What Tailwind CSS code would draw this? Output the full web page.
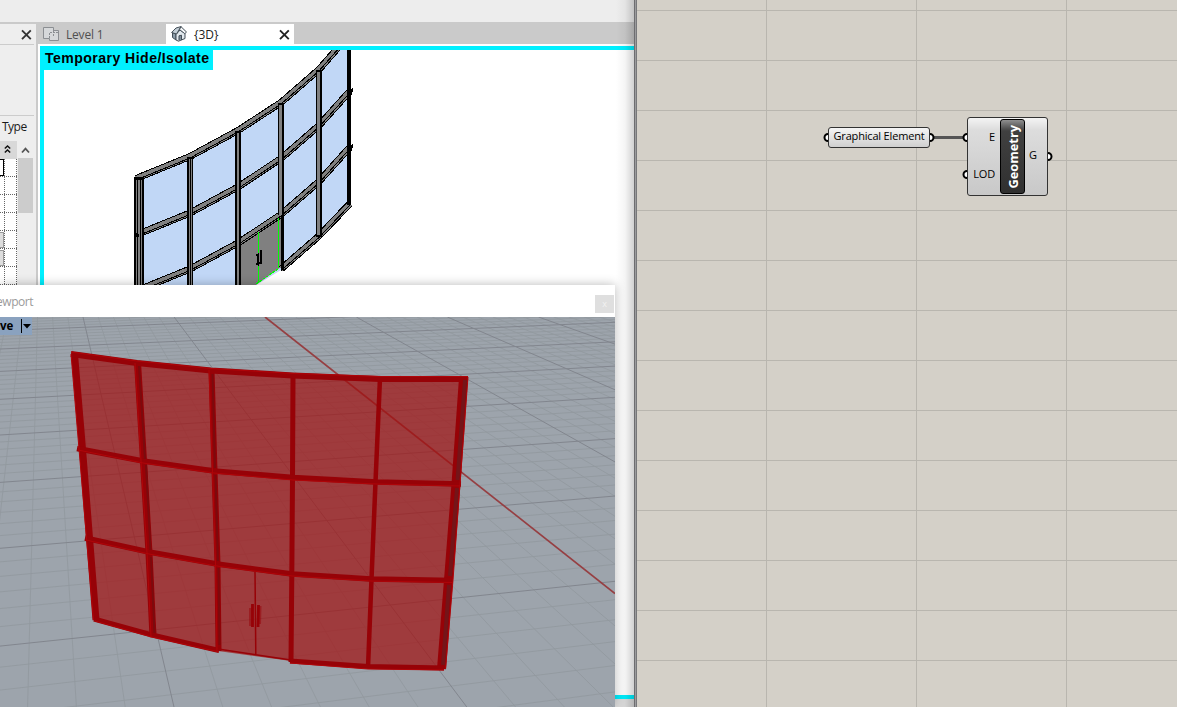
<!DOCTYPE html>
<html lang="en">
<head>
<meta charset="utf-8">
<title>Curtain wall geometry</title>
<script src="https://cdn.jsdelivr.net/npm/@tailwindcss/browser@4"></script>
</head>
<body class="flex w-[1177px] h-[707px] overflow-hidden bg-[#d4d0c8] font-['Open_Sans','Noto_Sans',sans-serif] text-[12px] text-[#1a1a1a]">

<!-- Modelling application -->
<main class="relative flex flex-col w-[634px] h-[707px] shrink-0 overflow-hidden bg-[#ededed]">
  <div class="h-[22px] shrink-0 bg-[#ededed]"></div>
  <div class="flex h-[685px] shrink-0 bg-[#cacaca] pt-[2px]">
    <!-- Properties -->
    <aside class="w-[36px] h-full shrink-0 bg-[#eeeeee] flex flex-col">
      <div class="h-[21px] w-[34px] border-b border-[#cccccc] flex items-center justify-end pr-[2px] shrink-0">
        <svg class="size-[11px]" viewBox="0 0 11 11"><path d="M1 1.400 9.800 10.200M9.800 1.400 1 10.200" stroke="#333" stroke-width="1.900"/></svg>
      </div>
      <div class="h-[71px] w-[34px] border-b border-[#cccccc] shrink-0"></div>
      <div class="h-[25px] shrink-0 pl-[2px] pt-[2px] leading-[18px] text-[12px] tracking-[-0.5px]">Type</div>
      <div class="flex shrink-0">
        <div class="w-[17px] shrink-0">
          <svg class="block" width="17" height="150" viewBox="0 0 17 150" shape-rendering="crispEdges">
            <path fill="#d8d8d8" d="M0 0h17v18H0z"/><path fill="#fff" d="M0 18h17v132H0z"/>
            <g shape-rendering="auto" fill="none" stroke="#111" stroke-width="1.5"><path d="m4.800 7.500 2.700-2.500 2.700 2.500M4.800 11.500l2.700-2.500 2.700 2.500"/></g>
            <g stroke="#666" stroke-dasharray="1 1"><path d="M4.500 18v132M16.500 18v132M0 35.500h17M0 53.500h17M0 71.500h17M0 89.500h17M0 107.500h17M0 125.500h17M0 143.500h17"/></g>
            <path d="M-1 18.500h4.500v16H-1z" fill="#fff" stroke="#000"/>
            <path d="M-1 91.500h4.500v15H-1zM-1 109.500h4.500v15H-1z" fill="#ddd" stroke="#999"/>
          </svg>
        </div>
        <div class="w-[17px] pl-px shrink-0">
          <svg class="block" width="15" height="17"><path d="m4 11.500 3.500-3.800 3.500 3.800" fill="none" stroke="#555" stroke-width="1.800"/></svg>
          <div class="h-[55px] w-[15px] bg-[#cccccc]"></div>
        </div>
      </div>
    </aside>
    <!-- Document view -->
    <section class="flex flex-col grow pl-[2px]">
      <div class="flex h-[20px] shrink-0">
        <div class="flex items-center w-[128px] text-[#505050] pl-[5px]">
          <svg class="shrink-0" width="16" height="16" viewBox="0 0 16 16" fill="#d6d8da" stroke="#8b8e92"><path d="M.5 1.500h10v3h5v10h-9v-2h-6z"/><path d="M6.500 12V6.500M10.500 4v2M10.500 8v2M7 6.500h8" stroke-dasharray="2 1" fill="none"/></svg>
          <span class="pl-[7px] pt-px text-[12px] tracking-[-0.2px]">Level 1</span>
        </div>
        <div class="flex items-center w-[128px] bg-white text-[#222] pl-[5px]">
          <svg class="shrink-0" width="16" height="16" viewBox="0 0 16 16" stroke="#424d56" stroke-linejoin="round"><path d="M1.500 6.500 5 8v6l-3.500-2.500z" fill="#8d9daa"/><path d="M5 8.500 9 4l5 3.500v5l-6.500 2.700L5 14z" fill="#e1e8ed"/><path d="m.6 6.500 4.400-4.500 5-1.400L5.500 8z" fill="#c3ced6"/><path d="M10 .7 15.500 6l-1.700 1.700L8.500 3.500z" fill="#f7f9fa"/><path d="M8 14.500V9.800l2.500-.6V14" fill="#7d8d99"/></svg>
          <span class="pl-[7px] pt-px text-[12px] grow">{3D}</span>
          <svg class="mr-[4px]" width="11" height="11"><path d="M1 1.400 9.800 10.200M9.800 1.400 1 10.200" stroke="#222" stroke-width="1.900"/></svg>
        </div>
      </div>
      <div class="h-[654px] shrink-0 bg-white pl-[2px] pt-[2px]">
        <div class="relative h-[653px] border-l-4 border-y-4 border-[#00f0ff] bg-white">
          <svg class="absolute left-0 top-0" width="590" height="240" viewBox="44 50 590 240">
            <path fill="#c1d7f6" d="M136 177 190 155 238 129 281 101 319 68 350 34V204L319 236 281 270 258 284 190 324 136 346z"/>
            <path fill="#808080" d="M240 243 281 215V267L256 285H240z"/>
            <g fill="none" stroke="#000" shape-rendering="crispEdges">
              <g stroke-width="7">
                <path d="M136 178.500 190 156.500 238 130.500 281 102.500 319 69.500 350 34"/>
                <path d="M136 235 190 213 238 187 281 158.500 319 125.500 350 91"/>
                <path d="M136 291 190 269 238 243 281 214.500 319 181.500 350 147"/>
                <path d="M281 269 319 236 350 203.500"/>
              </g>
              <g stroke="#808080" stroke-width="5">
                <path d="M136 178.500 190 156.500 238 130.500 281 102.500 319 69.500 350 34"/>
                <path d="M136 235 190 213 238 187 281 158.500 319 125.500 350 91"/>
                <path d="M136 291 190 269 238 243 281 214.500 319 181.500 350 147"/>
                <path d="M281 269 319 236 350 203.500"/>
              </g>
              <g stroke-width="1">
                <path d="M136 180 190 158 238 132 281 104 319 71 350 35.500"/>
                <path d="M136 236.500 190 214.500 238 188.500 281 160 319 127 350 92.500"/>
                <path d="M136 292.500 190 270.500 238 244.500 281 216 319 183 350 148.500"/>
                <path d="M281 270.500 319 237.500 350 205"/>
              </g>
            </g>
            <g shape-rendering="crispEdges">
              <path d="M134 177h10v113h-10zM187 157h6v133h-6zM235 131h6v159h-6zM278 103h6v112h-6zM281 215h3v55h-3zM316 70h6v167h-6zM347 50h4v155h-4z"/>
              <path fill="#808080" d="M136 180h1v110h-1zM138 180h2v110h-2zM141 180h1v110h-1zM189 159h1v131h-1zM191 159h1v131h-1zM237 133h2v157h-2zM279 105h3v110h-3zM317 72h3v163h-3z"/>
              <path d="m347 90 6-2v4l-5 2zM347 146l6-2v4l-5 2zM134 233l5 1v3h-4z"/>
              <path d="M258 232h1v51h-1zM278 218h1v50h-1z" fill="#00ff00"/>
              <path d="m256 284 22-15" stroke="#00ff00" stroke-dasharray="3 1" fill="none"/>
              <path d="M256 254h2v-1h1v13h-1v-1h-2v-2h1v-7h-1zM260 250h2v14h-3v-2h1z"/>
            </g>
          </svg>
          <div class="relative w-[169px] h-[20px] bg-[#00f0ff] pl-px text-[14.100px] leading-[16px] font-bold font-['Liberation_Sans',sans-serif] text-black whitespace-nowrap tracking-[0.440px]">Temporary Hide/Isolate</div>
        </div>
      </div>
      <div class="grow bg-[#dddddd]"></div>
    </section>
  </div>
  <div class="absolute right-0 top-0 w-[18px] h-full bg-gradient-to-r from-black/0 via-black/4 to-black/18"></div>

  <!-- Floating viewport window -->
  <div class="absolute left-0 top-[285px] w-[615px] h-[422px] shadow-[0_0_10px_rgba(0,0,0,0.28)] flex flex-col">
    <div class="h-[32px] shrink-0 bg-white flex items-center justify-between pr-px">
      <span class="-ml-[4px] pt-px text-[12px] tracking-[-0.45px] text-[#9b9b9b]">ewport</span>
      <div class="w-[19px] h-[18px] mt-[5px] bg-[#dfdfdf] text-[#f2f2f2] text-[9px] leading-[17px] text-center">x</div>
    </div>
    <div class="relative h-[390px] bg-[#9da4ac] overflow-hidden">
      <svg class="absolute left-0 top-0" width="615" height="390" viewBox="0 317 615 390">
        <g id="minor" stroke="#92999f" stroke-opacity=".85" fill="none"></g>
        <g id="major" stroke="#82868e" fill="none"></g>
        <path d="M265 317 615 593.500" stroke="#963f42" stroke-width="1.700"/>
        <path fill="#a1100f" fill-opacity=".71" d="M72 353 137 362 211 370 293 375 380 378 467 378 459 484 452 580 444 669 368 667 291 661 218 651 152 636 95 620 83 449z"/>
        <g fill="none" stroke="#970207" stroke-linejoin="round">
          <g stroke-width="6">
            <path stroke-width="7" d="M74.500 354 82.500 449 89.500 538 96 620"/>
            <path stroke-width="7" d="M137.500 362 143.500 461 149 553 153 637"/>
            <path d="M211.500 370 214.500 471 217.500 564 218.500 651"/>
            <path stroke-width="5" d="M293 375 292.500 478 291.800 574 291 662"/>
            <path stroke-width="4.500" d="M380 378 375.500 482 371.500 579 368 668"/>
            <path stroke-width="9" d="M463.500 378 456 484 448.500 580 441.500 669"/>
            <path d="M71 354 137 363 211 370.500 293 375.500 380 379 468 379"/>
            <path stroke-width="5.500" d="M77 448.500 143 461 214 471 293 477.500 376 482 461 484"/>
            <path stroke-width="5.500" d="M85 538 149 552 217 564 292 574 371 579 453 580.500"/>
            <path stroke-width="5" d="M94 619 152 635 219 650.500M290 661 368 666.500 444 668"/>
          </g>
          <g stroke="#7b0b0e" stroke-width="2">
            <path d="M139 366 145 459M146 465 150.500 550M151 557 154.500 633M212.500 374 215 468M215.500 475 218 561M218.500 568 219.500 645"/>
            <path stroke="#741519" stroke-width="4" d="M465 380 457.500 480M457 488 450 576M449 585 443 665"/>
          </g>
          <g stroke="#b00509" stroke-width="1">
            <path d="M71 354 79 449 86.500 538 93.500 620M135 363 141 461 147 553 151 637M209 370 212.500 471 215.500 564 217 651M468 377 460 484 453 580 445.500 669M71 352 137 361 211 368.500 293 373.500 380 376.500 468 376.500"/>
            <path d="M78 450 143 463 214 473 293 480 376 484 460 486M86 540 149 554 217 566 292 576 371 581 453 582.500M95 621 152 637 219 652M290 663 368 669 444 670"/>
          </g>
          <path stroke-width="1.500" d="M218 649 291 660M255 572 255.800 654"/>
          <path stroke-width="2.800" d="M252.500 604V627M258.500 605 258 627"/>
          <path stroke-width="3" d="M250.500 608v18M260 606l-.5 18" stroke-opacity=".5"/>
        </g>
      </svg>
      <div class="relative flex w-[32px] h-[18px] bg-[#8aa2bf] text-black font-bold text-[11.500px] leading-[17px]">
        <span class="w-[22px] border-r border-black my-[2px] leading-[14px]">ve</span>
        <svg width="10" height="18"><path d="M1 7h8L5 11.500z"/></svg>
      </div>
    </div>
  </div>
</main>

<div class="w-[3px] h-full shrink-0 bg-gradient-to-r from-[#57575a] via-[#9b9b9d] to-[#66676a]"></div>

<!-- Node canvas -->
<section class="relative grow h-full bg-[#d4d0c8] overflow-hidden">
  <svg class="absolute left-0 top-0" width="540" height="707" viewBox="637 0 540 707" shape-rendering="crispEdges" stroke="#b9b6af">
    <path d="M637 10.500h540M637 60.500h540M637 110.500h540M637 160.500h540M637 210.500h540M637 260.500h540M637 310.500h540M637 360.500h540M637 410.500h540M637 460.500h540M637 510.500h540M637 560.500h540M637 610.500h540M637 660.500h540M766.500 0v707M916.500 0v707M1066.500 0v707"/>
  </svg>
  <svg class="absolute left-0 top-0" width="540" height="707" viewBox="637 0 540 707">
    <path d="M933 137.500h31" stroke="#555" stroke-width="3"/>
    <g fill="#fff" stroke="#000" stroke-width="2"><circle cx="828" cy="137.500" r="3.500"/><circle cx="930" cy="137.500" r="3.500"/><circle cx="967" cy="137.500" r="3.500"/><circle cx="967" cy="174.500" r="3.500"/><circle cx="1048" cy="156.500" r="3.500"/></g>
  </svg>
  <div class="absolute left-[191px] top-[127px] w-[102px] h-[21px] rounded-[3px] border border-[#333] bg-gradient-to-b from-[#f6f6f6] to-[#cfcfcf] text-[11px] tracking-[-0.180px] leading-[16px] text-center whitespace-nowrap text-black">Graphical Element</div>
  <div class="absolute left-[330px] top-[117px] w-[81px] h-[79px] rounded-[3px] border border-[#333] bg-gradient-to-b from-[#f4f4f4] via-[#dddddd] via-15% to-[#c8c8c8] flex text-[11px] text-black py-px">
    <div class="w-[32px] pr-[5px] -mt-px flex flex-col text-right leading-[37px] shrink-0 tracking-[-0.2px]"><span>E</span><span>LOD</span></div>
    <div class="w-[25px] h-[75px] shrink-0 rounded-[3px] border border-black bg-gradient-to-b from-[#909090] via-[#404040] via-15% to-[#303030] flex items-center justify-center">
      <span class="[writing-mode:vertical-rl] rotate-180 text-white font-bold text-[12.800px] leading-[24px] whitespace-nowrap">Geometry</span>
    </div>
    <div class="w-[12px] leading-[71px] text-right">G</div>
  </div>
</section>

<script>
// Ground plane: both families of lines are evenly spaced in world units,
// so their screen positions follow from a perspective division.
const line = (x1, y1, x2, y2) => `<path d="M${x1.toFixed(1)} ${y1.toFixed(1)}L${x2.toFixed(1)} ${y2.toFixed(1)}"/>`;
let minor = '', major = '';
for (let i = -12; i <= 44; i++) {
  const v = i / 6, w = 1 - 0.09874 * v;
  const s = line(0, (349 - 14.28 * v) / w, 615, (322.3 - 14.23 * v) / w);
  if (i % 6 === 0) major += s; else minor += s;
}
for (let i = -8; i <= 38; i++) {
  if (i === 12) continue;
  const u = i / 6;
  const s = line(83 + 91.1 * u, 317, 174 + 292.8 * u, 707);
  if (i % 6 === 0) major += s; else minor += s;
}
document.getElementById('minor').innerHTML = minor;
document.getElementById('major').innerHTML = major;
</script>
</body>
</html>
